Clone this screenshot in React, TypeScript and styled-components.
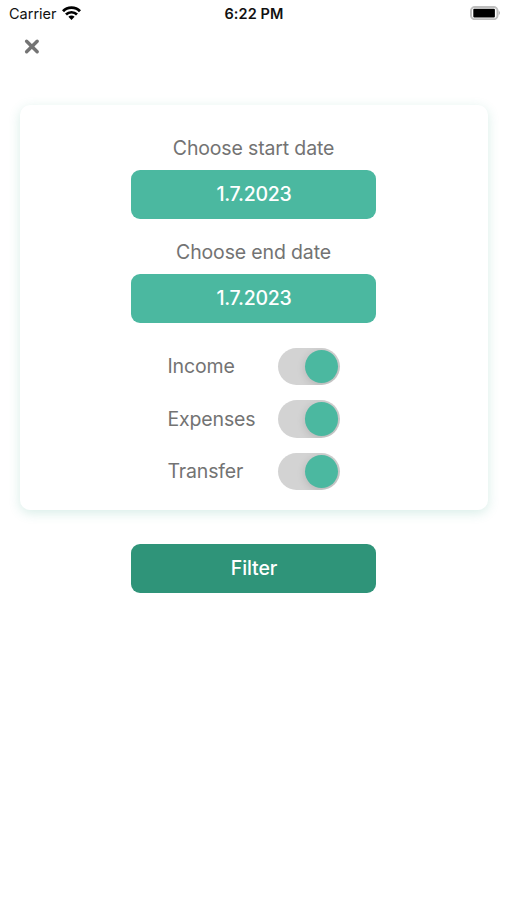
import React, { useState } from 'react';
import styled, { createGlobalStyle } from 'styled-components';

const GlobalStyle = createGlobalStyle`
  * { box-sizing: border-box; }
  body { margin: 0; background: #fff; font-family: Inter, "Liberation Sans", sans-serif; }
`;

const Screen = styled.main`
  height: 900px;
  display: flex;
  flex-direction: column;
  align-items: center;
  overflow: hidden;
`;

const StatusBar = styled.header`
  width: 100%;
  height: 28px;
  padding: 0 6px 0 9px;
  display: grid;
  grid-template-columns: 1fr auto 1fr;
  align-items: center;
  color: #111;
`;

const Carrier = styled.div`
  display: flex;
  align-items: center;
  gap: 5px;
  font-size: 14.5px;
  line-height: 28px;

  svg { margin-top: -2px; }
`;

const Clock = styled.time`
  margin-left: -2px;
  font-size: 14.5px;
  font-weight: 600;
  line-height: 28px;
  letter-spacing: 0.1px;
`;

const BatteryIcon = styled.svg`
  justify-self: end;
  margin-top: -2px;
`;

const Nav = styled.nav`
  width: 100%;
  height: 77px;
  padding: 10px 23px;
`;

const CloseButton = styled.button`
  display: flex;
  padding: 0;
  border: 0;
  background: none;
`;

const Card = styled.section`
  width: 468px;
  height: 405px;
  flex: none;
  padding-top: 31px;
  display: flex;
  flex-direction: column;
  align-items: center;
  border-radius: 10px;
  background: #fff;
  box-shadow: 0 3px 12px rgba(55, 165, 137, 0.2);
`;

const Field = styled.div`
  height: 104.3px;
  flex: none;
  display: flex;
  flex-direction: column;
  align-items: center;
`;

const Label = styled.span`
  color: #737373;
  font-size: 19.5px;
  font-weight: 440;
  line-height: 24px;
  letter-spacing: -0.15px;
  white-space: nowrap;
`;

const Button = styled.button<{ $primary?: boolean }>`
  width: 245px;
  height: 49px;
  flex: none;
  margin-top: ${({ $primary }) => ($primary ? 34 : 10)}px;
  padding: 0 0 0 1px;
  border: 0;
  border-radius: 9px;
  background: ${({ $primary }) => ($primary ? '#2f9479' : '#4bb8a0')};
  color: #fff;
  font: 500 19.5px/49px Inter, "Liberation Sans", sans-serif;
  letter-spacing: ${({ $primary }) => ($primary ? -0.1 : -0.25)}px;
`;

const Options = styled.div`
  width: 172px;
  flex: none;
  margin-top: 3px;
  display: flex;
  flex-direction: column;
  gap: 15px;
`;

const Option = styled.div`
  height: 37.5px;
  display: flex;
  align-items: center;
  justify-content: space-between;
`;

const Switch = styled.button<{ $on: boolean }>`
  width: 62.5px;
  height: 37.5px;
  margin-right: -0.5px;
  padding: 2px;
  display: flex;
  justify-content: ${({ $on }) => ($on ? 'flex-end' : 'flex-start')};
  overflow: hidden;
  border: 0;
  border-radius: 19px;
  background: #d3d3d3;
`;

const Thumb = styled.span`
  width: 33.5px;
  height: 33.5px;
  border-radius: 50%;
  background: #4bb8a0;
  box-shadow: 0 2px 8px rgba(0, 0, 0, 0.15);
`;

function Toggle({ label }: { label: string }) {
  const [on, setOn] = useState(true);
  return (
    <Option>
      <Label>{label}</Label>
      <Switch $on={on} role="switch" aria-checked={on} aria-label={label} onClick={() => setOn(!on)}>
        <Thumb />
      </Switch>
    </Option>
  );
}

export default function App() {
  return (
    <>
      <GlobalStyle />
      <Screen>
        <StatusBar>
          <Carrier>
            Carrier
            <svg width="19" height="14" viewBox="0 0 19 14" fill="none" stroke="#000">
              <path d="M1 5.2C5.5.4 13.5.4 18 5.2" strokeWidth="2.9" />
              <path d="M4 8.5C7 5.5 12 5.5 15 8.5" strokeWidth="2.7" />
              <path d="M6.4 10.7C8 9.1 11 9.1 12.6 10.7L9.5 13.9Z" fill="#000" stroke="none" />
            </svg>
          </Carrier>
          <Clock>6:22 PM</Clock>
          <BatteryIcon width="31" height="14" viewBox="0 0 31 14">
            <rect x="1" y="1" width="26.5" height="12.2" rx="3.8" fill="#fff" stroke="#bebebe" strokeWidth="2" />
            <rect x="3.3" y="2.8" width="21.6" height="8.6" rx="1" fill="#000" />
            <path d="M28.8 4.8Q31 7 28.8 9.2Z" fill="#aaa" />
          </BatteryIcon>
        </StatusBar>
        <Nav>
          <CloseButton aria-label="Close">
            <svg width="17" height="17" viewBox="0 0 17 17" stroke="#747474" strokeWidth="3.4" strokeLinecap="round">
              <path d="M3.6 3.2L14.2 13.8M14.2 3.2L3.6 13.8" />
            </svg>
          </CloseButton>
        </Nav>
        <Card>
          <Field><Label>Choose start date</Label><Button>1.7.2023</Button></Field>
          <Field><Label>Choose end date</Label><Button>1.7.2023</Button></Field>
          <Options>
            <Toggle label="Income" />
            <Toggle label="Expenses" />
            <Toggle label="Transfer" />
          </Options>
        </Card>
        <Button $primary>Filter</Button>
      </Screen>
    </>
  );
}
